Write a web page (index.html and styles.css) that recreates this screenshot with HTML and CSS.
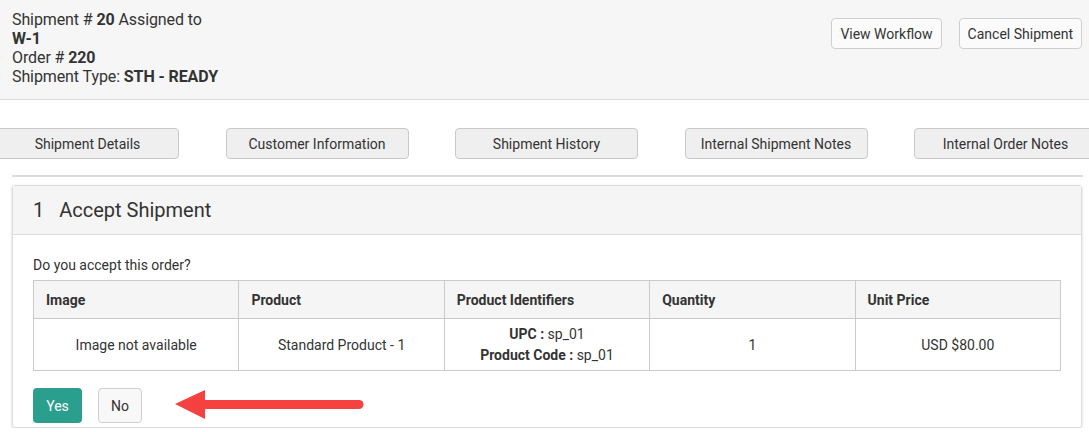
FILE: index.html
```html
<!DOCTYPE html>
<html>
<head>
<meta charset="utf-8">
<link rel="stylesheet" href="styles.css">
</head>
<body>
<header class="top">
  <div class="info">
    <div>Shipment # <b>20</b> Assigned to</div>
    <div><b>W-1</b></div>
    <div>Order # <b>220</b></div>
    <div>Shipment Type: <b>STH - READY</b></div>
  </div>
  <div class="actions">
    <button class="btn">View Workflow</button>
    <button class="btn">Cancel Shipment</button>
  </div>
</header>
<nav class="tabs">
  <button class="tab">Shipment Details</button>
  <button class="tab">Customer Information</button>
  <button class="tab">Shipment History</button>
  <button class="tab">Internal Shipment Notes</button>
  <button class="tab">Internal Order Notes</button>
</nav>
<hr class="divider">
<section class="card">
  <div class="card-head"><span class="num">1</span>Accept Shipment</div>
  <div class="card-body">
    <p class="question">Do you accept this order?</p>
    <table class="grid">
      <thead>
        <tr><th>Image</th><th>Product</th><th>Product Identifiers</th><th>Quantity</th><th>Unit Price</th></tr>
      </thead>
      <tbody>
        <tr>
          <td>Image not available</td>
          <td>Standard Product - 1</td>
          <td class="ids"><div><b>UPC :</b> sp_01</div><div><b>Product Code :</b> sp_01</div></td>
          <td>1</td>
          <td>USD $80.00</td>
        </tr>
      </tbody>
    </table>
    <div class="answer">
      <button class="yes">Yes</button>
      <button class="no">No</button>
      <svg class="arrow" width="190" height="32" viewBox="0 0 190 32">
        <polygon points="0,15 30,1 30,30" fill="#f5413f"/>
        <line x1="26" y1="15.5" x2="184" y2="15.5" stroke="#f5413f" stroke-width="9" stroke-linecap="round"/>
      </svg>
    </div>
  </div>
</section>
</body>
</html>
```

FILE: styles.css
```css
* { box-sizing: border-box; }
html, body { margin: 0; padding: 0; background: #fff; }
body {
  font-family: Roboto, "Liberation Sans", sans-serif;
  color: #333;
  font-size: 14px;
  overflow: hidden;
}
b { font-weight: 700; }
button { font-family: inherit; cursor: pointer; }

.top {
  display: flex;
  justify-content: space-between;
  align-items: flex-start;
  background: #f6f6f6;
  border-bottom: 1px solid #dcdcdc;
  padding: 10px 7px 14px 12px;
  height: 100px;
}
.info { font-size: 16px; line-height: 19px; color: #333; letter-spacing: -0.1px; }
.actions { display: flex; gap: 17px; margin-top: 8px; }
.btn {
  height: 31px;
  padding: 0 8px;
  font-size: 14px;
  color: #333;
  background: #fbfbfb;
  border: 1px solid #cfcfcf;
  border-radius: 4px;
}

.tabs {
  display: flex;
  gap: 46.5px;
  margin: 28px 0 0 -4px;
  white-space: nowrap;
}
.tab {
  flex: 0 0 183px;
  height: 31px;
  font-size: 14px;
  color: #333;
  background: #efefef;
  border: 1px solid #c9c9c9;
  border-radius: 4px;
}

.divider {
  margin: 16px 6px 0 12px;
  border: 0;
  height: 2px;
  background: #dcdcdc;
}

.card {
  margin: 8px 7px 0 12px;
  border: 1px solid #dcdcdc;
  border-radius: 3px;
  box-shadow: 0 1px 3px rgba(0,0,0,0.18);
}
.card-head {
  height: 49px;
  background: #f5f5f5;
  border-bottom: 1px solid #dcdcdc;
  padding-left: 20px;
  font-size: 20px;
  line-height: 48px;
  color: #333;
}
.num { display: inline-block; margin-right: 15px; }
.card-body { padding: 22px 21px 4px 20px; }
.question { margin: 0 0 6px; line-height: 17px; font-size: 14px; }

.grid {
  width: 1028px;
  border-collapse: collapse;
  table-layout: fixed;
  font-size: 14px;
}
.grid th, .grid td { border: 1px solid #cacaca; }
.grid th {
  height: 38px;
  background: #f5f5f5;
  text-align: left;
  padding: 0 12px;
  font-weight: 700;
  color: #333;
}
.grid td {
  height: 52px;
  text-align: center;
  color: #333;
}
.ids { line-height: 21px; }

.answer {
  position: relative;
  display: flex;
  gap: 16px;
  margin-top: 17px;
  height: 35px;
}
.yes {
  width: 49px;
  height: 35px;
  background: #2a9f8e;
  color: #fff;
  border: 0;
  border-radius: 4px;
  font-size: 14px;
}
.no {
  width: 44px;
  height: 35px;
  background: #f8f8f8;
  color: #333;
  border: 1px solid #cfcfcf;
  border-radius: 4px;
  font-size: 14px;
}
.arrow {
  position: absolute;
  left: 142px;
  top: 1px;
}
```
